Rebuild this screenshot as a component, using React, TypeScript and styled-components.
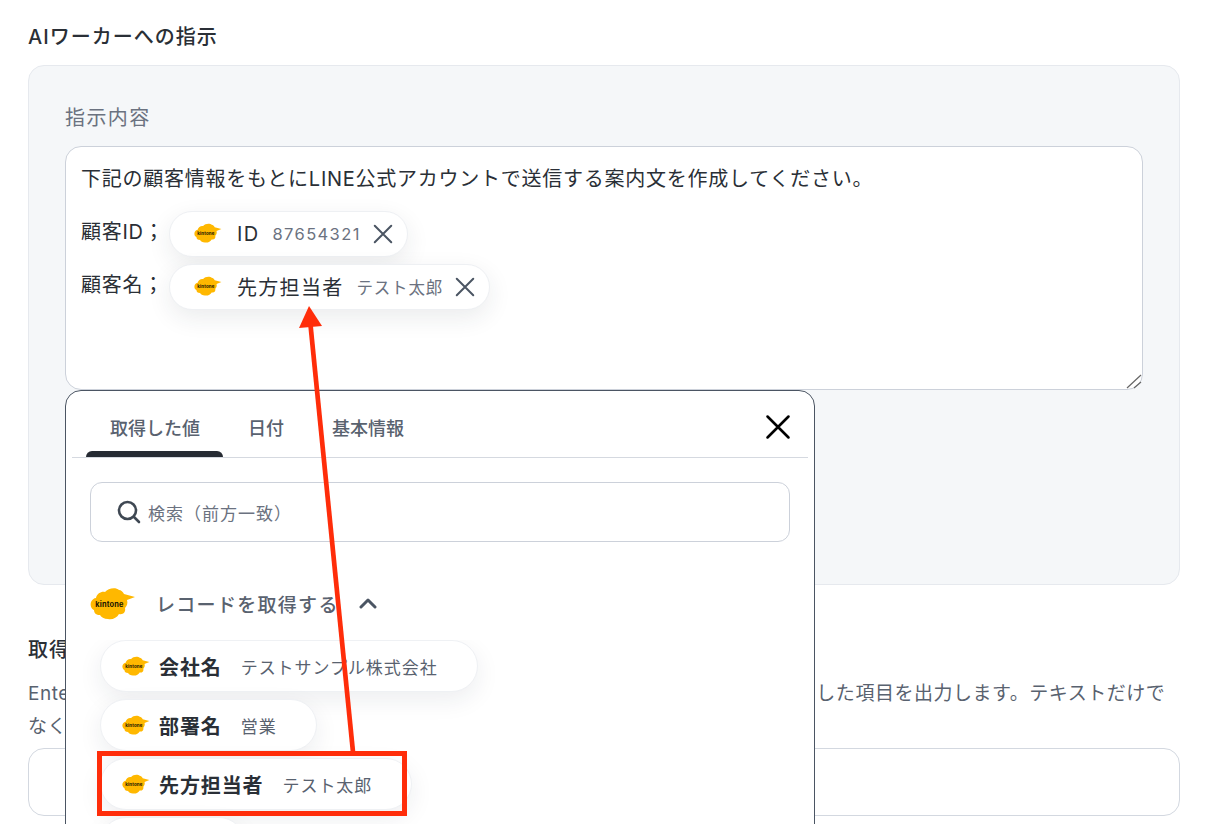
import React from 'react';
import styled, { createGlobalStyle } from 'styled-components';

const GlobalStyle = createGlobalStyle`
  html, body {
    margin: 0;
    padding: 0;
    background: #fff;
  }
  body {
    font-family: Inter, "Noto Sans CJK JP", sans-serif;
    color: #2a2f36;
  }
`;

const Page = styled.div`
  position: relative;
  width: 1224px;
  height: 824px;
  overflow: hidden;
  padding: 25px 44px 0 28px;
  box-sizing: border-box;
`;

const SectionTitle = styled.div`
  font-size: 20px;
  line-height: 24px;
  font-weight: 500;
  letter-spacing: 1px;
  color: #2a2f36;
`;

const Panel = styled.div`
  margin-top: 16px;
  height: 520px;
  box-sizing: border-box;
  padding: 38px 36px 0;
  background: #f5f7f9;
  border: 1px solid #e6e9ee;
  border-radius: 16px;
  position: relative;
`;

const FieldLabel = styled.div`
  font-size: 20px;
  line-height: 28px;
  letter-spacing: 1.4px;
  color: #6b7280;
`;

const Editor = styled.div`
  margin-top: 14px;
  height: 244px;
  box-sizing: border-box;
  padding: 18px 15px 0;
  background: #fff;
  border: 1px solid #ccd1da;
  border-radius: 16px;
  position: relative;
  font-size: 20px;
  letter-spacing: 0.75px;
  color: #2a2f36;
`;

const EditorLine = styled.div`
  line-height: 28px;
`;

const ValueRow = styled.div`
  display: flex;
  align-items: center;
  height: 53px;
`;

const ValueRows = styled.div`
  margin-top: 14px;
`;

const RowLabel = styled.span`
  width: 88px;
  flex: none;
  line-height: 28px;
  margin-bottom: 4px;
`;

const ValueChip = styled.div`
  display: flex;
  align-items: center;
  height: 46px;
  box-sizing: border-box;
  padding: 0 13px 0 24px;
  background: #fff;
  border: 1px solid #eef0f3;
  border-radius: 23px;
  box-shadow: 0 8px 24px rgba(30, 40, 60, 0.09);
`;

const ChipName = styled.span`
  font-size: 20px;
  letter-spacing: 1.3px;
  color: #2a2f36;
  margin-left: 15px;
`;

const ChipValue = styled.span<{ $digits?: boolean }>`
  font-size: 16.5px;
  letter-spacing: ${(p) => (p.$digits ? '1.4px' : '0.8px')};
  color: #6b7280;
  margin-left: 13px;
`;

const ChipClose = styled.span`
  display: flex;
  margin-left: 11px;
  color: #4b5563;
`;

const ResizeGrip = styled.svg`
  position: absolute;
  right: -1px;
  bottom: 0;
`;

const Popup = styled.div`
  position: absolute;
  left: 36px;
  top: 324px;
  width: 750px;
  height: 460px;
  box-sizing: border-box;
  padding: 0 6px;
  background: #fff;
  border: 1px solid #4b5563;
  border-radius: 16px;
  z-index: 2;
`;

const TabBar = styled.div`
  display: flex;
  align-items: flex-end;
  gap: 1px;
  height: 67px;
  box-sizing: border-box;
  border-bottom: 1px solid #d5d9e0;
  padding-left: 14px;
  position: relative;
`;

const Tab = styled.div<{ $active?: boolean }>`
  position: relative;
  height: 66px;
  box-sizing: border-box;
  padding: 26px 23px 0 24px;
  font-size: 18px;
  line-height: 24px;
  font-weight: 500;
  color: #59626f;
  &::after {
    content: '';
    display: ${(p) => (p.$active ? 'block' : 'none')};
    position: absolute;
    left: 0;
    right: 0;
    bottom: 0;
    height: 6px;
    background: #262b33;
    border-radius: 6px 6px 0 0;
  }
`;

const PopupClose = styled.span`
  position: absolute;
  right: 16px;
  top: 22px;
  display: flex;
  color: #000;
`;

const SearchBox = styled.div`
  display: flex;
  align-items: center;
  margin: 24px 18px 0;
  height: 60px;
  box-sizing: border-box;
  padding-left: 25px;
  border: 1px solid #ccd1da;
  border-radius: 12px;
  color: #6b7280;
  font-size: 17px;
  letter-spacing: 1px;
`;

const SearchText = styled.span`
  margin-left: 6px;
`;

const GroupHeader = styled.div`
  display: flex;
  align-items: center;
  margin: 37px 0 0 18px;
  height: 48px;
  color: #59626f;
  font-size: 19px;
  letter-spacing: 1.3px;
  font-weight: 500;
`;

const GroupName = styled.span`
  margin-left: 20px;
`;

const GroupChevron = styled.span`
  display: flex;
  margin-left: 20px;
  color: #4b5563;
`;

const ChipList = styled.div`
  margin-top: 13px;
  padding: 0 0 40px 28px;
  display: flex;
  flex-direction: column;
  align-items: flex-start;
  gap: 7px;
  overflow: hidden;
`;

const ListChip = styled.div<{ $width?: number }>`
  display: flex;
  align-items: center;
  flex: none;
  height: 52px;
  width: ${(p) => (p.$width ? `${p.$width}px` : 'auto')};
  box-sizing: border-box;
  padding: 0 39px 0 21px;
  background: #fff;
  border: 1px solid #eff1f4;
  border-radius: 26px;
  box-shadow: 0 8px 24px rgba(30, 40, 60, 0.08);
`;

const ListChipName = styled.span`
  margin-left: 9px;
  font-size: 20px;
  letter-spacing: 0.9px;
  font-weight: 700;
  color: #2a2f36;
`;

const ListChipValue = styled.span`
  margin-left: 19px;
  font-size: 17px;
  letter-spacing: 0.95px;
  color: #59626f;
`;

const NextSection = styled.div`
  margin-top: 53px;
`;

const Description = styled.div`
  margin-top: 15px;
  font-size: 19px;
  letter-spacing: 0.52px;
  line-height: 33px;
  color: #59626f;
`;

const TextInput = styled.div`
  margin-top: 5px;
  height: 68px;
  box-sizing: border-box;
  border: 1px solid #d3d8e0;
  border-radius: 16px;
  background: #fff;
`;

const Annotation = styled.svg`
  position: absolute;
  left: 0;
  top: 0;
  z-index: 3;
  pointer-events: none;
`;

const Kintone = ({ width }: { width: number }) => (
  <svg width={width} viewBox="0 0 46 33" style={{ flex: 'none' }}>
    <path
      d="M6 11C7 6 12 4 15 5C18 1 26 0 29 3C31 3 33 5 34 7L45 10L37 13C38 16 37 19 35 21C36 25 33 28 29 27C27 31 22 33 18 32C14 32 11 30 10 28C6 28 4 26 4 23C1 22 0 18 1 15C2 13 4 11 6 11Z"
      fill="#ffb800"
    />
    <text x="19.5" y="19.5" fontSize="7.4" fontWeight="700" letterSpacing="0.2" fontFamily="Inter, sans-serif" textAnchor="middle" fill="#1a1400">
      kintone
    </text>
  </svg>
);

const Cross = ({ size, weight }: { size: number; weight: number }) => (
  <svg width={size} height={size} viewBox="0 0 24 24" fill="none" stroke="currentColor" strokeWidth={weight} strokeLinecap="round">
    <path d="M3 3l18 18M21 3L3 21" />
  </svg>
);

export default function App() {
  return (
    <>
      <GlobalStyle />
      <Page>
        <SectionTitle>AIワーカーへの指示</SectionTitle>
        <Panel>
          <FieldLabel>指示内容</FieldLabel>
          <Editor>
            <EditorLine>下記の顧客情報をもとにLINE公式アカウントで送信する案内文を作成してください。</EditorLine>
            <ValueRows>
              <ValueRow>
                <RowLabel>顧客ID；</RowLabel>
                <ValueChip>
                  <Kintone width={28} />
                  <ChipName>ID</ChipName>
                  <ChipValue $digits>87654321</ChipValue>
                  <ChipClose><Cross size={22} weight={2.2} /></ChipClose>
                </ValueChip>
              </ValueRow>
              <ValueRow>
                <RowLabel>顧客名；</RowLabel>
                <ValueChip>
                  <Kintone width={28} />
                  <ChipName>先方担当者</ChipName>
                  <ChipValue>テスト太郎</ChipValue>
                  <ChipClose><Cross size={22} weight={2.2} /></ChipClose>
                </ValueChip>
              </ValueRow>
            </ValueRows>
            <ResizeGrip width="18" height="16" viewBox="0 0 18 16" fill="none" stroke="#666" strokeWidth="1.2">
              <path d="M2 15L16 2M9 15l7-6" />
            </ResizeGrip>
          </Editor>
          <Popup>
            <TabBar>
              <Tab $active>取得した値</Tab>
              <Tab>日付</Tab>
              <Tab>基本情報</Tab>
              <PopupClose><Cross size={28} weight={2.2} /></PopupClose>
            </TabBar>
            <SearchBox>
              <svg width="26" height="26" viewBox="0 0 26 26" fill="none" stroke="#3f4853" strokeWidth="2.6" strokeLinecap="round">
                <circle cx="11.5" cy="11.5" r="8.5" />
                <path d="M18 18l5 5" />
              </svg>
              <SearchText>検索（前方一致）</SearchText>
            </SearchBox>
            <GroupHeader>
              <Kintone width={46} />
              <GroupName>レコードを取得する</GroupName>
              <GroupChevron>
                <svg width="18" height="12" viewBox="0 0 18 12" fill="none" stroke="currentColor" strokeWidth="3" strokeLinecap="round" strokeLinejoin="round">
                  <path d="M2 10l7-7 7 7" />
                </svg>
              </GroupChevron>
            </GroupHeader>
            <ChipList>
              <ListChip>
                <Kintone width={28} />
                <ListChipName>会社名</ListChipName>
                <ListChipValue>テストサンプル株式会社</ListChipValue>
              </ListChip>
              <ListChip>
                <Kintone width={28} />
                <ListChipName>部署名</ListChipName>
                <ListChipValue>営業</ListChipValue>
              </ListChip>
              <ListChip>
                <Kintone width={28} />
                <ListChipName>先方担当者</ListChipName>
                <ListChipValue>テスト太郎</ListChipValue>
              </ListChip>
              <ListChip $width={145} />
            </ChipList>
          </Popup>
        </Panel>
        <NextSection>
          <SectionTitle>取得した値</SectionTitle>
          <Description>
            Enterキーを押して項目を追加してください。指示内容をもとに、AIワーカーが自動で追加した項目を出力します。テキストだけでなく
          </Description>
          <TextInput />
        </NextSection>
        <Annotation width="1224" height="824" viewBox="0 0 1224 824" fill="none">
          <rect x="99.5" y="753.5" width="305" height="60" stroke="#ff2d0a" strokeWidth="5" />
          <path d="M353 752L310.5 325" stroke="#ff2d0a" strokeWidth="4.7" />
          <path d="M309 306L299 328L322 326Z" fill="#ff2d0a" />
        </Annotation>
      </Page>
    </>
  );
}
